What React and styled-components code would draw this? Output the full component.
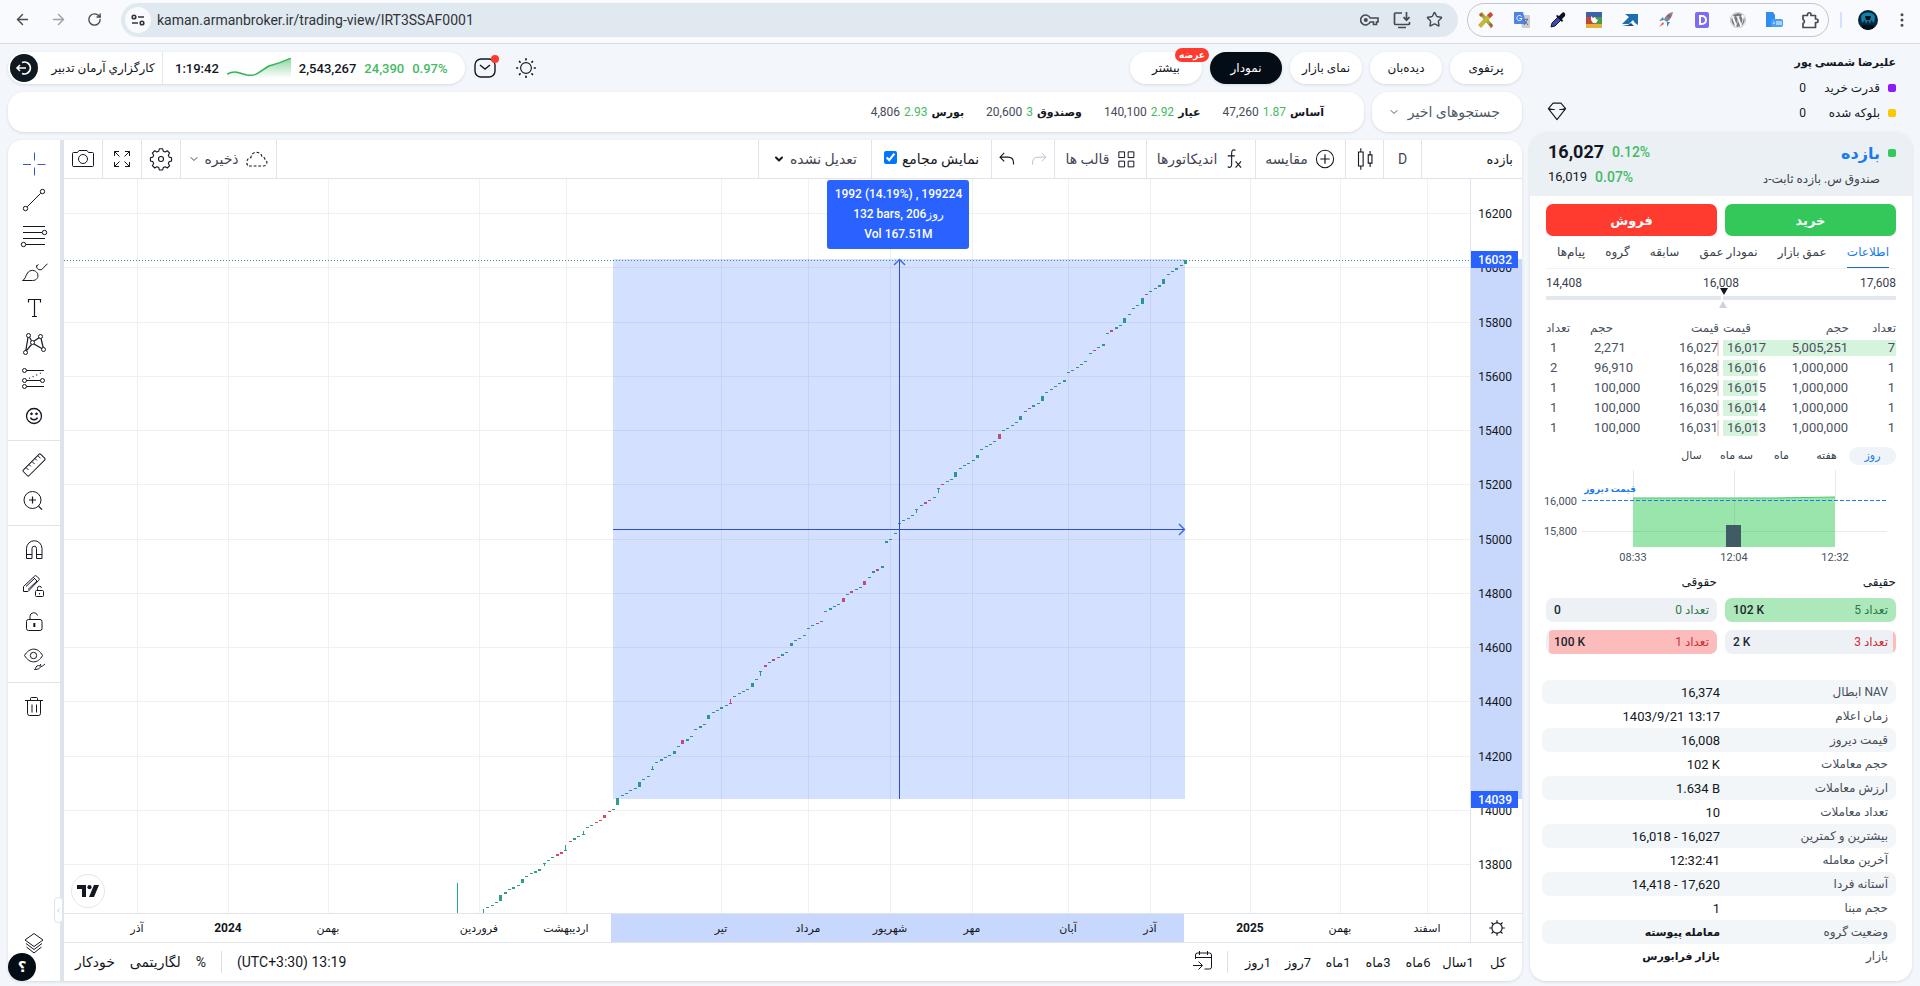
import React, { useState } from "react";
import styled, { createGlobalStyle, css } from "styled-components";
import {
  ArrowLeft,
  ArrowRight,
  ChevronDown,
  ChevronLeft,
  EllipsisVertical,
  RotateCw,
  Star,
} from "lucide-react";
import { FaWordpress } from "react-icons/fa";

const GlobalStyle = createGlobalStyle`
  * {
    box-sizing: border-box;
  }

  body {
    margin: 0;
    background-color: #f3f7fb;
    color: #131722;
    font-family: Roboto, "DejaVu Sans", sans-serif;
    font-size: 12px;
  }

  button {
    background: none;
    border: none;
    padding: 0;
    color: inherit;
    font: inherit;
    cursor: pointer;
  }

  h1, h2, p, dl, dd, dt {
    margin: 0;
    font: inherit;
  }
`;

const Page = styled.div`
  display: flex;
  flex-direction: column;
  min-height: 100vh;
`;

/* ---------- browser bar ---------- */

const BrowserBar = styled.header`
  display: flex;
  align-items: center;
  gap: 9px;
  height: 44px;
  padding: 3px 8px 7px 4px;
  background-color: #f8fafd;
  border-bottom: 1px solid #d9dde3;
  color: #474b50;
`;

const BrowserBtn = styled.button`
  display: flex;
  align-items: center;
  justify-content: center;
  width: ${({ $w }) => $w || 36}px;
  height: 32px;
  opacity: ${({ disabled }) => (disabled ? 0.5 : 1)};
`;

const NavGroup = styled.div`
  display: flex;
`;

const AddressBar = styled.div`
  display: flex;
  flex: 1;
  align-items: center;
  height: 34px;
  padding: 0 8px 0 4px;
  border-radius: 17px;
  background-color: #e1e9f0;
`;

const SiteInfo = styled.button`
  display: flex;
  align-items: center;
  justify-content: center;
  width: 26px;
  height: 26px;
  border-radius: 50%;
  background-color: #f8fafd;
`;

const Url = styled.input`
  flex: 1;
  min-width: 0;
  margin-left: 4px;
  border: none;
  outline: none;
  background: none;
  color: #30343a;
  font: 14px Roboto, sans-serif;
`;

const Extensions = styled.div`
  display: flex;
  align-items: center;
  height: 34px;
  border: 1px solid #c4c5d3;
  border-radius: 17px;
`;

const BrowserEnd = styled.div`
  display: flex;
  align-items: center;
  gap: 8px;
  padding-left: 2px;
`;

const ThinLine = styled.span`
  width: 2px;
  height: 16px;
  background-color: #d3e3fd;
`;

const Avatar = styled.span`
  display: flex;
  width: 20px;
  height: 20px;
  margin: 0 6px 0 8px;
  border-radius: 50%;
  overflow: hidden;
`;

/* ---------- app frame ---------- */

const Workspace = styled.main`
  display: flex;
  flex: 1;
  gap: 8px;
  padding: 0 8px 5px;
`;

const MainColumn = styled.div`
  display: flex;
  flex: 1;
  flex-direction: column;
  gap: 8px;
  min-width: 0;
  padding-top: 8px;
`;

const TopRow = styled.div`
  display: flex;
  align-items: center;
  height: 32px;
`;

const card = css`
  background-color: #fff;
  box-shadow: 0 1px 3px rgba(30, 50, 80, 0.14);
`;

const StatusPill = styled.div`
  ${card}
  display: flex;
  align-items: center;
  height: 32px;
  padding: 0 17px 0 2px;
  border-radius: 16px;
  white-space: nowrap;
`;

const ExitBtn = styled.button`
  display: flex;
  align-items: center;
  justify-content: center;
  width: 28px;
  height: 28px;
  border-radius: 50%;
  background-color: #101820;
`;

const BrokerName = styled.span`
  display: flex;
  align-items: center;
  justify-content: center;
  width: 125px;
  height: 32px;
  padding-left: 6px;
  border-right: 1px solid #e3e7ec;
  font-size: 12px;
`;

const IndexBox = styled.div`
  display: flex;
  align-items: center;
  gap: 8px;
  padding-left: 12px;
  font-size: 13px;
  font-weight: 500;
`;

const Green = styled.span`
  color: #43bb62;
`;

const IconBtn = styled.button`
  position: relative;
  display: flex;
  align-items: center;
  justify-content: center;
  width: 41px;
  height: 32px;
`;

const RedDot = styled.span`
  position: absolute;
  top: 3px;
  right: 7px;
  width: 8px;
  height: 8px;
  border-radius: 50%;
  background-color: #ff3b30;
`;

const NavTabs = styled.nav`
  display: flex;
  gap: 8px;
  margin-left: auto;
`;

const NavTab = styled.button`
  ${card}
  position: relative;
  width: 72px;
  height: 32px;
  border-radius: 16px;
  font-size: 12px;
  white-space: nowrap;
  ${({ $active }) =>
    $active &&
    css`
      background-color: #040d16;
      color: #fff;
    `}
`;

const NavBadge = styled.span`
  position: absolute;
  top: -4px;
  right: -7px;
  padding: 0 4px;
  border-radius: 7px;
  background-color: #ff3b30;
  color: #fff;
  font-size: 9px;
  font-weight: 700;
  line-height: 14px;
`;

const SearchRow = styled.div`
  display: flex;
  gap: 8px;
`;

const Watchlist = styled.div`
  ${card}
  display: flex;
  flex: 1;
  align-items: center;
  gap: 22px;
  height: 40px;
  padding: 0 40px;
  border-radius: 16px;
  color: #454c57;
  direction: rtl;
  white-space: nowrap;
`;

const WatchItem = styled.a`
  display: flex;
  gap: 4px;
  align-items: center;
  color: inherit;
  text-decoration: none;

  b {
    color: #131722;
    font-size: 11px;
  }
`;

const RecentSearch = styled.button`
  ${card}
  display: flex;
  align-items: center;
  justify-content: space-between;
  width: 150px;
  height: 40px;
  padding: 0 22px 0 16px;
  border-radius: 16px;
  color: #515a68;
  direction: rtl;
  font-size: 14px;
  white-space: nowrap;
`;

/* ---------- chart ---------- */

const ChartCard = styled.section`
  ${card}
  display: flex;
  flex: 1;
  border-radius: 14px;
`;

const ToolRail = styled.div`
  position: relative;
  display: flex;
  flex-direction: column;
  align-items: center;
  width: 56px;
  padding: 6px 0 20px;
  border-right: 4px solid #dfe3ec;

  hr {
    align-self: stretch;
    height: 1px;
    margin: 6px 0;
    border: none;
    background-color: #e0e3eb;
  }
`;

const RailBtn = styled.button`
  display: flex;
  align-items: center;
  justify-content: center;
  width: 52px;
  height: 36px;
  margin-top: ${({ $last }) => ($last ? "auto" : 0)};
`;

const HelpBtn = styled.button`
  position: absolute;
  bottom: 0;
  left: 0;
  width: 28px;
  height: 28px;
  border-radius: 50%;
  background-color: #040d16;
  color: #fff;
  font-size: 15px;
  font-weight: 700;
`;

const CollapseBtn = styled.button`
  position: absolute;
  right: -3px;
  bottom: 58px;
  display: flex;
  align-items: center;
  justify-content: center;
  width: 9px;
  height: 26px;
  border: 1px solid #dfe3ec;
  border-radius: 4px;
  background-color: #fff;
  color: #9aa0ab;
`;

const ChartArea = styled.div`
  display: flex;
  flex: 1;
  flex-direction: column;
  min-width: 0;
`;

const Toolbar = styled.div`
  display: flex;
  height: 39px;
  border-bottom: 1px solid #e0e3eb;
  direction: rtl;
  white-space: nowrap;
`;

const Tool = styled.div`
  display: flex;
  align-items: center;
  justify-content: center;
  gap: 6px;
  width: ${({ $w }) => $w}px;
  border-left: 1px solid #e0e3eb;
  color: #434651;
  font-size: 14px;

  button {
    display: flex;
    align-items: center;
    gap: ${({ $gap }) => $gap || 6}px;
  }
`;

const ToolEnd = styled.div`
  display: flex;
  flex-direction: row-reverse;
  margin-right: auto;

  ${Tool} {
    border-left: none;
    border-right: 1px solid #e0e3eb;
  }
`;

const SymbolTool = styled(Tool)`
  justify-content: flex-start;
  padding-right: 9px;
  color: #131722;
  font-size: 13px;
`;

const CheckLabel = styled.label`
  display: flex;
  align-items: center;
  gap: 5px;
  color: #131722;

  input {
    width: 13px;
    height: 13px;
    margin: 0 0 4px;
    accent-color: #0075ff;
  }
`;

const AdjustSelect = styled.select`
  border: none;
  background: none;
  color: #434651;
  font: 14px Roboto, "DejaVu Sans", sans-serif;
  appearance: none;
`;

const AdjustBox = styled.label`
  display: flex;
  align-items: center;
  gap: 4px;
`;

const ChartGrid = styled.div`
  display: grid;
  flex: 1;
  grid-template-columns: 1fr 52px;
  grid-template-rows: 1fr 29px;
`;

const Pane = styled.div`
  position: relative;
  min-width: 0;

  > svg {
    position: absolute;
    width: 100%;
    height: 100%;
  }
`;

const PriceAxis = styled(Pane)`
  border-left: 1px solid #e0e3eb;
`;

const TimeAxis = styled(Pane)`
  border-top: 1px solid #e0e3eb;
`;

const AxisCorner = styled.button`
  display: flex;
  align-items: center;
  justify-content: center;
  border-top: 1px solid #e0e3eb;
  border-left: 1px solid #e0e3eb;
`;

const AxisText = styled.text`
  fill: #131722;
  font-family: Roboto, "DejaVu Sans", sans-serif;
  font-size: ${({ $size }) => $size || 12}px;
  font-weight: ${({ $weight }) => $weight || 400};
`;

const MeasureTip = styled.div`
  position: absolute;
  top: 1px;
  left: 54.3%;
  width: 142px;
  padding: 4px 0 5px;
  border-radius: 3px;
  background-color: #2962ff;
  color: #fff;
  font-size: 12px;
  font-weight: 500;
  line-height: 20px;
  text-align: center;
`;

const TvBadge = styled.a`
  position: absolute;
  bottom: 5px;
  left: 7px;
  display: flex;
  align-items: center;
  justify-content: center;
  width: 34px;
  height: 34px;
  border: 1px solid #e6e6e6;
  border-radius: 50%;
  background-color: #fff;
`;

const BottomBar = styled.div`
  display: flex;
  align-items: center;
  height: 39px;
  padding: 0 4px 0 11px;
  border-top: 1px solid #e0e3eb;
  font-size: 14px;
  white-space: nowrap;
`;

const BottomGroup = styled.div`
  display: flex;
  align-items: center;
  gap: ${({ $gap }) => $gap}px;
  margin-left: ${({ $end }) => ($end ? "auto" : 0)};
`;

const RangeBtn = styled.button`
  width: 40px;
  font-size: 13px;
  text-align: center;
`;

const BarLine = styled.span`
  width: 1px;
  height: 22px;
  background-color: #dcdfe5;
`;

/* ---------- sidebar ---------- */

const Side = styled.aside`
  display: flex;
  flex-direction: column;
  width: 382px;
`;

const Account = styled.div`
  display: flex;
  align-items: flex-end;
  justify-content: space-between;
  height: 88px;
  padding: 6px 16px 7px;
  direction: rtl;
`;

const AccountRow = styled.p`
  display: flex;
  align-items: center;
  gap: 8px;
  height: 25px;

  span {
    width: 66px;
  }
`;

const Square = styled.i`
  width: 8px;
  height: 8px;
  border-radius: 2px;
  background-color: ${({ $color }) => $color};
`;

const UserName = styled.h2`
  height: 25px;
  font-size: 11px;
  font-weight: 700;
  line-height: 25px;
`;

const SideCard = styled.section`
  ${card}
  display: flex;
  flex: 1;
  flex-direction: column;
  border-radius: 16px;
  overflow: hidden;
`;

const SymbolHead = styled.header`
  display: flex;
  justify-content: space-between;
  height: 64px;
  padding: 7px 16px 0 18px;
  background-color: #ebf0f5;
`;

const PriceLine = styled.p`
  display: flex;
  align-items: center;
  gap: 8px;
  height: 25px;
  font-size: ${({ $big }) => ($big ? 18 : 13)}px;
  font-weight: ${({ $big }) => ($big ? 700 : 400)};

  ${Green} {
    font-size: 14px;
    font-weight: 500;
  }
`;

const SymbolName = styled.h1`
  display: flex;
  align-items: center;
  gap: 8px;
  height: 28px;
  color: #187bf0;
  direction: rtl;
  font-size: 16px;
  font-weight: 700;
`;

const SymbolSub = styled.p`
  padding-right: 16px;
  color: #3b424d;
  direction: rtl;
  font-size: 12px;
  line-height: 24px;
`;

const SideBody = styled.div`
  display: flex;
  flex-direction: column;
  padding: 8px 16px 0;
`;

const OrderBtns = styled.div`
  display: grid;
  grid-template-columns: 1fr 1fr;
  gap: 8px;
`;

const OrderBtn = styled.button`
  height: 32px;
  border-radius: 7px;
  background-color: ${({ $sell }) => ($sell ? "#ff3b30" : "#34c759")};
  color: #fff;
  font-size: 13px;
  font-weight: 700;
`;

const InfoTabs = styled.div`
  display: flex;
  justify-content: space-between;
  height: 33px;
  padding: 0 7px 0 11px;
  border-bottom: 1px solid #f0f2f5;
  direction: rtl;
`;

const InfoTab = styled.button`
  border-bottom: 1px solid transparent;
  color: #3b424d;
  font-size: 12px;
  white-space: nowrap;
  ${({ $active }) =>
    $active &&
    css`
      border-color: #1a6fb8;
      color: #187bf0;
    `}
`;

const RangeBox = styled.div`
  display: flex;
  flex-direction: column;
  padding-top: 5px;
  color: #3b424d;

  svg {
    width: 100%;
    margin-top: -7px;
  }
`;

const RangeLabels = styled.div`
  display: flex;
  justify-content: space-between;
  line-height: 18px;
`;

const DepthBox = styled.div`
  display: flex;
  gap: 4px;
  margin-top: 2px;
`;

const DepthTable = styled.table`
  flex: 1;
  table-layout: fixed;
  border-collapse: separate;
  border-spacing: 0 4px;
  color: #4a5260;
  font-size: 13px;

  th {
    height: 16px;
    padding: 0;
    font-size: 12px;
    font-weight: 400;
    line-height: 16px;
  }

  td {
    height: 16px;
    padding: 0 1px 0 4px;
    line-height: 16px;
  }
`;

const Cell = styled.td`
  text-align: ${({ $align }) => $align};
`;

const HeadCell = styled.th`
  width: ${({ $w }) => $w}px;
  text-align: ${({ $align }) => $align};
`;

const Periods = styled.div`
  display: flex;
  direction: rtl;
  margin-top: 7px;
`;

const Period = styled.button`
  width: ${({ $active }) => ($active ? 47 : 45)}px;
  height: 18px;
  border-radius: 9px;
  background-color: ${({ $active }) => ($active ? "#eff4f9" : "transparent")};
  color: ${({ $active }) => ($active ? "#187bf0" : "#3b424d")};
  font-size: 11px;
  line-height: 18px;
  white-space: nowrap;
`;

const MiniChart = styled.svg`
  width: 100%;
  height: 100px;
  margin-top: 5px;
  overflow: visible;
  font-family: Roboto, "DejaVu Sans", sans-serif;
  font-size: 11px;
`;

const Holders = styled.div`
  display: grid;
  grid-template-columns: 1fr 1fr;
  column-gap: 8px;
  row-gap: 8px;
  margin-top: 4px;
  direction: rtl;
`;

const HolderTitle = styled.h2`
  font-size: 12px;
  line-height: 16px;
`;

const HolderBar = styled.div`
  display: flex;
  align-items: center;
  justify-content: space-between;
  height: 24px;
  padding: 0 8px;
  border-radius: 7px;
  color: ${({ $sell }) => ($sell ? "#d12f35" : "#2c7a45")};
  font-size: 12px;

  b {
    color: #20262e;
    font-weight: 500;
    direction: ltr;
  }
`;

const InfoList = styled.dl`
  margin: 26px 0 0 -4px;
`;

const InfoRow = styled.div`
  display: grid;
  grid-template-columns: 178px 1fr;
  align-items: center;
  height: 24px;
  padding-right: 8px;
  border-radius: 7px;

  &:nth-child(odd) {
    background-color: #f2f6f9;
  }

  dt {
    order: 2;
    color: #474d57;
    direction: rtl;
    font-size: 12px;
  }

  dd {
    font-size: ${({ $persian }) => ($persian ? 11 : 13)}px;
    font-weight: ${({ $persian }) => ($persian ? 700 : 400)};
    text-align: right;
  }
`;

/* ---------- data ---------- */

const navTabs = ["بیشتر", "نمودار", "نمای بازار", "دیده‌بان", "پرتفوی"];

const watchlist = [
  ["آساس", "1.87", "47,260"],
  ["عیار", "2.92", "140,100"],
  ["وصندوق", "3", "20,600"],
  ["بورس", "2.93", "4,806"],
];

const infoTabs = ["اطلاعات", "عمق بازار", "نمودار عمق", "سابقه", "گروه", "پیام‌ها"];
const periods = ["روز", "هفته", "ماه", "سه ماه", "سال"];
const ranges = ["1روز", "7روز", "1ماه", "3ماه", "6ماه", "1سال", "کل"];

const buyOrders = [
  ["16,017", "5,005,251", "7", 100],
  ["16,016", "1,000,000", "1", 20],
  ["16,015", "1,000,000", "1", 20],
  ["16,014", "1,000,000", "1", 20],
  ["16,013", "1,000,000", "1", 20],
];

const sellOrders = [
  ["1", "2,271", "16,027"],
  ["2", "96,910", "16,028"],
  ["1", "100,000", "16,029"],
  ["1", "100,000", "16,030"],
  ["1", "100,000", "16,031"],
];

const holders = [
  { label: "تعداد 5", value: "102 K", share: 100 },
  { label: "تعداد 0", value: "0", share: 0 },
  { label: "تعداد 3", value: "2 K", share: 2, sell: true },
  { label: "تعداد 1", value: "100 K", share: 98, sell: true },
];

const info = [
  ["NAV ابطال", "16,374"],
  ["زمان اعلام", "1403/9/21 13:17"],
  ["قیمت دیروز", "16,008"],
  ["حجم معاملات", "102 K"],
  ["ارزش معاملات", "1.634 B"],
  ["تعداد معاملات", "10"],
  ["بیشترین و کمترین", "16,018 - 16,027"],
  ["آخرین معامله", "12:32:41"],
  ["آستانه فردا", "14,418 - 17,620"],
  ["حجم مبنا", "1"],
  ["وضعیت گروه", "معامله پیوسته", true],
  ["بازار", "بازار فرابورس", true],
];

const PANE_W = 1406;
const PANE_H = 734;

const months = [
  [73, "آذر"],
  [164, "2024"],
  [264, "بهمن"],
  [415, "فروردین"],
  [502, "اردیبهشت"],
  [657, "تیر"],
  [744, "مرداد"],
  [826, "شهریور"],
  [908, "مهر"],
  [1004, "آبان"],
  [1086, "آذر"],
  [1186, "2025"],
  [1276, "بهمن"],
  [1363, "اسفند"],
];

const prices = Array.from({ length: 13 }, (_, i) => ({
  value: 16200 - i * 200,
  y: 34 + i * 54.27,
}));

const marks = [
  [80, "16032"],
  [620, "14039"],
];

// one entry per bar: top[+height][r = down][t / l = wick under / over the tick]
const bars = `730+5l 728 726 723 716+6 713+2 710 708+2 706 700+4 697 694 692+2 690+2 684+3t 681 678 675+2r 673+2r
666+6l 662r 659+2 657 652+4l 648 646 643r 641r 636+3r 632r 630 619+7 616 614 611 609 603+5 600 597 587+4l
583 580+2 578 576 572+3 567 561+4r 560+2 557 550 547+2 545 536+4 533 531 528+2 526 520+5rl 517 514 512 510
504+4 500 492+5t 486+2r 483 480+2r 478r 475+2 473 464+3 461 459 456 449 446 444r 442 432 429+2 427 425 419+4r
415 412+2r 410 408 402+4r 398 392+2 390+2r 387+2 362+2 360 354 344 341 339 336 330+4t 326 323+2r 321r 318
309+5t 305r 302 300 293+5 289 286 284 281 276+3 270 267 265 262 255+5r 251 249 246 243 237+4 232 229r 226+2
224 217+5 213 210 207 204 201+2 193 191 188 185 182 174 171r 168 165+2 154 151+2r 148+2 146 139+5 135 129 126
119+6 115r 112 109 106+2 100+5 95 92 89+2 86 81+4`
  .split(/\s+/)
  .map((item, i) => {
    const [, top, height, flags] = item.match(/^(\d+)(?:\+(\d+))?(\w*)$/);
    return {
      x: Math.round(419 + i * 4.334),
      top: Number(top),
      height: Number(height || 1),
      down: flags.includes("r"),
      wick: flags.includes("t") ? "t" : flags.includes("l") ? "l" : "",
    };
  });

const percent = (value, total) => `${(value / total) * 100}%`;

/* ---------- drawings ---------- */

const Line = ({ size = 28, children, color = "#131722", ...rest }) => (
  <svg
    width={size}
    height={size}
    viewBox="0 0 28 28"
    fill="none"
    stroke={color}
    strokeWidth="1"
    aria-hidden="true"
    {...rest}
  >
    {children}
  </svg>
);

const railIcons = {
  نشانگر: (
    <Line color="#3a55d9">
      <path d="M14.5 2.5v8M14.5 17.500v8M3 14.5h8M17.500 14.5h8" />
    </Line>
  ),
  "خط روند": (
    <Line>
      <circle cx="5.5" cy="22.5" r="2.2" />
      <circle cx="22.5" cy="5.5" r="2.2" />
      <path d="M7.3 20.7 20.7 7.3" />
    </Line>
  ),
  فیبوناچی: (
    <Line>
      <path d="M3 4.5h22M3 10.5h19M3 16.5h22M6 22.5h19" />
      <circle cx="24.5" cy="10.5" r="2.2" />
      <circle cx="3.5" cy="22.5" r="2.2" />
    </Line>
  ),
  قلم: (
    <Line>
      <path d="M2.5 22.5c3-1 2.5-4 5-7.500a5.800 5.800 0 0 1 10 .5c1.500 4-1 7-5 7z" />
      <path d="M17.500 7c-1.500 1-1 4.500 2.500 4.800 3 .2 3.500-3.300 7.500-5.800M16.500 9c0-1 .5-2 2-2.500" />
    </Line>
  ),
  متن: (
    <Line>
      <path d="M8.5 8.5v-3h12v3M14.5 5.5v17M12 22.5h5" strokeWidth="1.2" />
    </Line>
  ),
  الگو: (
    <Line>
      <circle cx="8.5" cy="5.5" r="2" />
      <circle cx="20.5" cy="6.5" r="2" />
      <circle cx="12.5" cy="12.5" r="2" />
      <circle cx="5.5" cy="22.5" r="2" />
      <circle cx="23.5" cy="19.5" r="2" />
      <path
        d="m8 7.5-2.2 13M9.5 7.3l2 3.5M11.5 14.5l-5 6.2M14.2 11l4.800-3.300M14 14l7.800 4.500M21 8.5l2.200 9"
        strokeWidth="1.2"
      />
    </Line>
  ),
  پیش‌بینی: (
    <Line>
      <circle cx="4.5" cy="4.5" r="2" />
      <circle cx="4.5" cy="14.5" r="2" />
      <circle cx="4.5" cy="20.5" r="2" />
      <circle cx="22.5" cy="14.5" r="2" />
      <path d="M6.5 4.5H24M6.5 14.5h14M6.5 20.5H24" />
      <path d="M9 12.5 23 6" strokeDasharray="1 3" strokeWidth="1.2" />
    </Line>
  ),
  شکلک: (
    <Line>
      <circle cx="14" cy="14" r="7.5" strokeWidth="1.3" />
      <path d="M10.5 15.5c1 3 6 3 7 0" strokeWidth="1.3" />
      <circle cx="11.5" cy="11.8" r=".9" fill="#131722" />
      <circle cx="16.5" cy="11.8" r=".9" fill="#131722" />
    </Line>
  ),
  اندازه: (
    <Line>
      <rect x="1.8" y="10" width="24.5" height="8" rx="1" transform="rotate(-45 14 14)" />
      <path d="m6 16.5 2.5 2.5M9 13.5l1.800 1.800M12 10.5l2.500 2.500M15 7.5l1.800 1.800M18 4.800l2.500 2.500" />
    </Line>
  ),
  بزرگنمایی: (
    <Line>
      <circle cx="12.5" cy="13" r="8.5" />
      <path d="M12.5 9.5v7M9 13h7M18.5 19.2l3.500 3.500" strokeWidth="1.2" />
    </Line>
  ),
  آهنربا: (
    <Line>
      <path d="M6.5 22.5v-10a7.500 7.500 0 0 1 15.5 0v10h-5.500v-10a2 2 0 0 0-4.500 0v10zM6.5 18.5H12M16.5 18.5H22" />
    </Line>
  ),
  "قفل قلم": (
    <Line>
      <path d="M3.5 14.5 14.5 4.2a1.500 1.500 0 0 1 2.200 0l2 2a1.500 1.500 0 0 1 0 2.200L8 19.5H3.5zM6 14.5l9-8.500M8 17.5l9-8.500M13.5 5.5l4 4" />
      <rect x="15.5" y="18.5" width="8" height="6" rx="1" />
      <path d="M17.5 18.5v-2a2 2 0 0 1 4-.5M19.5 21v1.5" />
    </Line>
  ),
  قفل: (
    <Line>
      <rect x="6.5" y="11.5" width="15.5" height="11" rx="2" />
      <path d="M10 11.5v-3c0-4.500 6.500-5 7.500-1" />
      <path d="M14.3 15v4" strokeWidth="2" />
    </Line>
  ),
  نمایش: (
    <Line>
      <path d="M4.5 11.5c5-8.500 13.500-8.500 18 0-4.500 8.500-13 8.500-18 0z" />
      <circle cx="13.5" cy="11.5" r="3.2" />
      <path d="M14.5 25.5c1.500-.5 1-4 4-4 3.500.5 2 4-4 4zM20 22l.8-2M21 22.5c2-.2 2.500-1.500 4-2.500" />
    </Line>
  ),
  حذف: (
    <Line>
      <path d="M5 7.5h18M10.5 7.5v-2a1 1 0 0 1 1-1h5a1 1 0 0 1 1 1v2M7.5 7.5v13a2 2 0 0 0 2 2h9a2 2 0 0 0 2-2v-13M12 11.5v8M16.5 11.5v8" />
    </Line>
  ),
};

const LayersIcon = () => (
  <Line>
    <path d="m14 4.5 9 6.5-9 6.5L5 11z" />
    <path d="m6 14.5 8 6 8-6M6.5 18l7.500 6 7.500-6" />
  </Line>
);

const CameraIcon = () => (
  <Line>
    <path d="M4.5 7.500h4l1.500-2h8l1.500 2h4a1 1 0 0 1 1 1v12a1 1 0 0 1-1 1h-19a1 1 0 0 1-1-1v-12a1 1 0 0 1 1-1z" />
    <circle cx="14" cy="14" r="4.500" />
  </Line>
);

const FullscreenIcon = () => (
  <Line>
    <path d="M6.5 11V6.5H11M6.5 6.5l5 5M17 6.5h4.500V11M21.5 6.5l-5 5M6.5 17v4.500H11M6.5 21.5l5-5M17 21.5h4.500V17M21.5 21.5l-5-5" />
  </Line>
);

const GearIcon = () => (
  <Line size={26}>
    <path
      d="M12.2 4.5h3.600l.6 2.600 2.100.9 2.300-1.400 2.500 2.500-1.400 2.300.9 2.100 2.600.6v3.600l-2.600.6-.9 2.100 1.400 2.300-2.500 2.500-2.300-1.400-2.100.9-.6 2.600h-3.600l-.6-2.600-2.100-.9-2.300 1.400-2.500-2.500 1.400-2.300-.9-2.100-2.600-.6v-3.600l2.600-.6.9-2.100L4.700 9.100l2.500-2.500L9.500 8l2.100-.9z"
      transform="translate(0 -1.500)"
      strokeWidth="1.200"
      strokeLinejoin="round"
    />
    <circle cx="14" cy="14" r="2.700" strokeWidth="1.200" />
  </Line>
);

const CloudIcon = () => (
  <Line size={26}>
    <path
      d="M6.5 21.5h16a4 4 0 0 0 1-7.500c-.5-2-2-2.500-3-2.500-1-6-11-7-12 1-5 0-6 8-2 9z"
      strokeDasharray="3 2"
      strokeWidth="1.2"
    />
  </Line>
);

const AxisSunIcon = () => (
  <Line size={22}>
    <circle cx="14" cy="14" r="6.5" strokeWidth="1.5" />
    <path
      d="M14 4v3.500M14 20.5V24M4 14h3.500M20.5 14H24M7 7l2.400 2.400M18.6 18.6 21 21M21 7l-2.400 2.400M9.400 18.6 7 21"
      strokeWidth="1.5"
    />
  </Line>
);

const ThemeIcon = () => (
  <Line size={26}>
    <circle cx="14" cy="14" r="5.8" strokeWidth="1.2" />
    <path
      d="M14 4v1M14 23v1M4 14h1M23 14h1M7 7l.6.6M20.400 20.400l.6.6M21 7l-.6.6M7.600 20.400l-.6.6"
      strokeWidth="1.800"
      strokeLinecap="round"
    />
  </Line>
);

const MailIcon = () => (
  <Line>
    <rect x="4" y="5" width="20" height="18" rx="6" strokeWidth="1.4" />
    <path d="m9 11 5 4 5-4" strokeWidth="1.4" />
  </Line>
);

const Sparkline = () => (
  <svg width="64" height="20" viewBox="0 0 64 20" aria-hidden="true">
    <defs>
      <linearGradient id="spark" x1="0" y1="0" x2="0" y2="1">
        <stop offset="0" stopColor="#43bb62" stopOpacity=".6" />
        <stop offset="1" stopColor="#43bb62" stopOpacity="0" />
      </linearGradient>
    </defs>
    <path d="M0 16c8-4 12-1 20 1 10 2 14-5 22-9 8-2 14-4 22-8v20H0z" fill="url(#spark)" />
    <path
      d="M0 16c8-4 12-1 20 1 10 2 14-5 22-9 8-2 14-4 22-8"
      fill="none"
      stroke="#35b257"
      strokeWidth="1.5"
    />
  </svg>
);

const KeyIcon = () => (
  <svg width="20" height="14" viewBox="0 0 20 14" fill="none" stroke="#474b50" strokeWidth="1.6">
    <path d="M10.2 5H18v4h-1.500v2.500h-3V9h-3.300a5 5 0 1 1 0-4z" />
    <circle cx="5.800" cy="7" r="1.200" fill="#474b50" />
  </svg>
);

const InstallIcon = () => (
  <svg width="18" height="18" viewBox="0 0 18 18" fill="none" stroke="#474b50" strokeWidth="1.700">
    <path d="M9 2H2.500a1 1 0 0 0-1 1v9.500a1 1 0 0 0 1 1h13a1 1 0 0 0 1-1V11M5 16.500h8M13.500 1v8M10.500 6.200l3 3 3-3" />
  </svg>
);

const extensionIcons = [
  <svg key="x" width="18" height="18" viewBox="0 0 18 18">
    <path d="M2 3 5 1l11 13-2 3z" fill="#8bb53c" />
    <path d="M13 1l3 3L4 17l-3-3z" fill="#c9b53d" />
    <path d="M10 4l4-3 2 3-3 3zM2 4l2-2 2 2-2 2zM12 13l2-1 2 3-2 2z" fill="#d0453c" />
  </svg>,
  <svg key="g" width="18" height="18" viewBox="0 0 18 18">
    <path d="M7 4h9a1 1 0 0 1 1 1v11a1 1 0 0 1-1 1H9z" fill="#c9ccd1" />
    <path d="M1 1h9l3 12H2a1 1 0 0 1-1-1z" fill="#4d84ec" />
    <path d="M8.5 5.5A2.600 2.600 0 1 0 9 7.5H6.5" fill="none" stroke="#fff" />
    <path d="m10 9 5-1-4 6M11 9l4 5" fill="none" stroke="#66707e" />
  </svg>,
  <svg key="p" width="18" height="18" viewBox="0 0 18 18">
    <path d="m2 16 1-4 6-6 3 3-6 6z" fill="#3f4ba8" stroke="#10152e" />
    <path d="M8 4l2 1 3-3c2-2 4 1 3 3l-3 3 1 2-1 1-6-6z" fill="#0c1028" />
  </svg>,
  <svg key="m" width="16" height="16" viewBox="0 0 16 16">
    <path d="M0 0h16v5H0z" fill="#3a62ae" />
    <path d="M0 5h8v11H0z" fill="#c64535" />
    <path d="M8 5h8v11H8z" fill="#4e9a4a" />
    <path d="M0 12h16v4H0z" fill="#e3b23a" />
    <path d="m5 4 2 2 2-1 1 2 2 1-2 3H7L5 8z" fill="#fff" />
  </svg>,
  <svg key="a" width="18" height="18" viewBox="0 0 18 18">
    <path d="M4 3h13v11l-3-2-2-3-4 4H1l7-7z" fill="#1b6fae" />
    <path d="M1 15l6-1 3-2 3 3z" fill="#174f86" />
  </svg>,
  <svg key="r" width="18" height="18" viewBox="0 0 18 18">
    <path d="M16 1c-5 1-8 4-9 8l3 2c3-2 5-5 6-10z" fill="#7b8a9b" />
    <path d="m7 9-5 1 4-4zM10 11v5l3-5z" fill="#3f86c9" />
    <path d="m6 11-4 5 5-3z" fill="#e85b3a" />
    <circle cx="12" cy="5" r="1.500" fill="#d84040" />
  </svg>,
  <svg key="d" width="16" height="16" viewBox="0 0 16 16">
    <rect x="1" width="14" height="16" rx="2" fill="#7c6cf2" />
    <path d="M6 4h2a4 4 0 0 1 0 8H6z" fill="none" stroke="#fff" strokeWidth="2" />
  </svg>,
  <FaWordpress key="w" size={16} color="#777b80" />,
  <svg key="b" width="18" height="18" viewBox="0 0 18 18">
    <path d="M1 1h7l2 3v12H1z" fill="#2f8cf0" />
    <rect x="6" y="8" width="12" height="8" rx="2" fill="#4b9ff5" />
    <path d="M8 12h2M12 10v4M14 10v4M16 10v4" stroke="#fff" />
  </svg>,
  <svg key="z" width="18" height="18" viewBox="0 0 18 18" fill="none" stroke="#474b50" strokeWidth="1.700">
    <path d="M2 4.500h4.500V3.500a1.500 1.500 0 0 1 3.500 0v1h4.500V8h.8a1.500 1.500 0 0 1 0 3.500h-.8v5H2v-4.200a2 2 0 0 0 0-3.800z" strokeLinejoin="round" />
  </svg>,
];

const CandleChart = () => (
  <svg viewBox={`0 0 ${PANE_W} ${PANE_H}`} preserveAspectRatio="none" shapeRendering="crispEdges">
    <g stroke="#eef0f2">
      {prices.map(({ value, y }) => (
        <path key={value} d={`M0 ${Math.round(y) + 0.5}H${PANE_W}`} />
      ))}
      {months.map(([x]) => (
        <path key={x} d={`M${x + 0.5} 0V${PANE_H}`} />
      ))}
    </g>
    <path d="M393.5 704v30" stroke="#26a69a" />
    {bars.map(({ x, top, height, down, wick }) => (
      <g key={x} fill={down ? "#e0485a" : "#2f9e88"}>
        <rect x={wick ? x : x - 1} y={top} width={wick ? 1 : 3} height={height} />
        {wick && (
          <rect x={x - 1} y={wick === "t" ? top : top + height - 1} width="3" height="1" />
        )}
      </g>
    ))}
    <rect x="549" y="80" width="572" height="540" fill="#2962ff" fillOpacity=".2" />
    <path d="M0 81.5H1406" stroke="#3b8f88" strokeDasharray="1 2" />
    <path d="M549 350.5h571M835.5 81v539" stroke="#2a4fd0" />
    <path
      d="m830 86 5.500-5.500L841 86M1115 345l5.500 5.500-5.500 5.500"
      fill="none"
      stroke="#4a6be0"
      strokeWidth="1.5"
      shapeRendering="auto"
    />
  </svg>
);

const PriceLabels = () => (
  <svg>
    <rect y={percent(80, PANE_H)} width="52" height={percent(540, PANE_H)} fill="#c8d7fc" />
    {prices.map(({ value, y }) => (
      <AxisText key={value} x="41" y={percent(y, PANE_H)} dy="5" textAnchor="end">
        {value}
      </AxisText>
    ))}
    {marks.map(([y, value]) => (
      <svg key={value} y={percent(y, PANE_H)} overflow="visible">
        <rect y="-8" width="47" height="17" fill="#2962ff" />
        <AxisText x="41" y="5" textAnchor="end" $weight={500} style={{ fill: "#fff" }}>
          {value}
        </AxisText>
      </svg>
    ))}
  </svg>
);

const TimeLabels = () => (
  <svg>
    <rect x={percent(547, PANE_W)} width={percent(573, PANE_W)} height="28" fill="#c8d7fc" />
    {months.map(([x, name]) => {
      const isYear = /\d/.test(name);
      return (
        <AxisText
          key={x}
          x={percent(x, PANE_W)}
          y="18"
          textAnchor="middle"
          $size={isYear ? 12 : 11}
          $weight={isYear ? 700 : 400}
        >
          {name}
        </AxisText>
      );
    })}
  </svg>
);

const IntradayChart = () => (
  <MiniChart viewBox="0 0 350 100" preserveAspectRatio="none">
    <g stroke="#e6e9ee">
      <path d="M36 61.5h305M87.5 0v30M188.5 0v30M289.5 0v30" />
    </g>
    <path d="M87 28h140l62-1v50H87z" fill="#9ae5ab" />
    <path d="M87 28h140l62-1" fill="none" stroke="#4fc46c" />
    <path d="M188.5 28v49M87 61.5h202" stroke="#8ed79f" />
    <rect x="180" y="55" width="15" height="22" fill="#405b63" />
    <path d="M36 30.5h304" stroke="#187bf0" strokeDasharray="4 2" />
    <g fill="#4a5260">
      <text x="31" y="35" textAnchor="end">16,000</text>
      <text x="31" y="65" textAnchor="end">15,800</text>
      <text x="87" y="91" textAnchor="middle">08:33</text>
      <text x="188" y="91" textAnchor="middle">12:04</text>
      <text x="289" y="91" textAnchor="middle">12:32</text>
    </g>
    <text x="64" y="22" textAnchor="middle" fill="#187bf0" fontSize="9" fontWeight="700">
      قیمت دیروز
    </text>
  </MiniChart>
);

/* ---------- sections ---------- */

const Browser = () => (
  <BrowserBar>
    <NavGroup>
      <BrowserBtn aria-label="Back">
        <ArrowLeft size={17} />
      </BrowserBtn>
      <BrowserBtn aria-label="Forward" disabled>
        <ArrowRight size={17} />
      </BrowserBtn>
      <BrowserBtn aria-label="Reload">
        <RotateCw size={15} strokeWidth={2.2} />
      </BrowserBtn>
    </NavGroup>
    <AddressBar>
      <SiteInfo aria-label="Site information">
        <svg width="14" height="14" viewBox="0 0 14 14" fill="none" stroke="#30343a" strokeWidth="1.6">
          <circle cx="3" cy="4" r="1.8" />
          <circle cx="11" cy="10" r="1.8" />
          <path d="M7 4h6M1 10h6" />
        </svg>
      </SiteInfo>
      <Url
        aria-label="Address"
        defaultValue="kaman.armanbroker.ir/trading-view/IRT3SSAF0001"
      />
      <BrowserBtn aria-label="Passwords" $w={32}>
        <KeyIcon />
      </BrowserBtn>
      <BrowserBtn aria-label="Install" $w={32}>
        <InstallIcon />
      </BrowserBtn>
      <BrowserBtn aria-label="Bookmark" $w={32}>
        <Star size={17} />
      </BrowserBtn>
    </AddressBar>
    <Extensions>
      {extensionIcons.map((icon, i) => (
        <BrowserBtn key={i} aria-label={`Extension ${i + 1}`}>
          {icon}
        </BrowserBtn>
      ))}
    </Extensions>
    <BrowserEnd>
      <ThinLine />
      <Avatar>
        <svg width="20" height="20" viewBox="0 0 20 20">
          <path d="M0 0h20v20H0z" fill="#06263c" />
          <path d="M3 7c1-6 13-6 14 0l-1 6-3-3-1 4-2-4-2 4-1-4-3 3z" fill="#147fa8" />
          <path d="M7 6h6l-1 4H8zM4 15h12v5H4z" fill="#031019" />
        </svg>
      </Avatar>
      <BrowserBtn aria-label="Menu" $w={20}>
        <EllipsisVertical size={18} />
      </BrowserBtn>
    </BrowserEnd>
  </BrowserBar>
);

const TopBar = () => (
  <TopRow>
    <StatusPill>
      <ExitBtn aria-label="خروج">
        <svg width="18" height="18" viewBox="0 0 18 18" fill="none" stroke="#fff" strokeWidth="1.6">
          <path d="M7 3.5a6 6 0 1 1 0 11M2 9h9M5 6 2 9l3 3" />
        </svg>
      </ExitBtn>
      <BrokerName>کارگزاري آرمان تدبیر</BrokerName>
      <IndexBox>
        <span>1:19:42</span>
        <Sparkline />
        <span>2,543,267</span>
        <Green>24,390</Green>
        <Green>0.97%</Green>
      </IndexBox>
    </StatusPill>
    <IconBtn aria-label="پیام‌ها">
      <MailIcon />
      <RedDot />
    </IconBtn>
    <IconBtn aria-label="پوسته">
      <ThemeIcon />
    </IconBtn>
    <NavTabs>
      {navTabs.map((tab) => (
        <NavTab key={tab} $active={tab === "نمودار"}>
          {tab}
          {tab === "بیشتر" && <NavBadge>عرضه</NavBadge>}
        </NavTab>
      ))}
    </NavTabs>
  </TopRow>
);

const ChartToolbar = () => {
  const [showMeetings, setShowMeetings] = useState(true);

  return (
    <Toolbar>
      <SymbolTool $w={101}>
        <button>بازده</button>
      </SymbolTool>
      <Tool $w={38}>
        <button>D</button>
      </Tool>
      <Tool $w={38}>
        <button aria-label="نوع نمودار">
          <Line size={26}>
            <path
              d="M9.5 2.5v4M9.5 21.5v4M7 6.5h5v15H7zM19.5 5.5v4M19.5 18.5v4M17.5 9.5h4v9h-4z"
              strokeWidth="1.2"
            />
          </Line>
        </button>
      </Tool>
      <Tool $w={90}>
        <button>
          <Line size={22}>
            <circle cx="14" cy="14" r="11" strokeWidth="1.3" />
            <path d="M14 8v12M8 14h12" strokeWidth="1.5" />
          </Line>
          مقایسه
        </button>
      </Tool>
      <Tool $w={109}>
        <button>
          <Line size={22}>
            <path
              d="M16 3c-4-1.500-5 0-5 4v14c0 3-2 4.500-5 3M6 10h9M16 17l7 8M23 17l-7 8"
              strokeWidth="1.400"
            />
          </Line>
          اندیکاتورها
        </button>
      </Tool>
      <Tool $w={92}>
        <button>
          <Line size={20}>
            <path
              d="M4 4h8v8H4zM17 4h8v8h-8zM4 17h8v8H4zM17 17h8v8h-8z"
              strokeWidth="1.400"
              strokeLinejoin="round"
            />
          </Line>
          قالب ها
        </button>
      </Tool>
      <Tool $w={63}>
        <button aria-label="Redo">
          <Line size={26} color="#b8bbc4">
            <path d="M7 20v-2c0-4 2-6 6-6h8M17 7.5l4.500 4.500-4.500 4.500" />
          </Line>
        </button>
        <button aria-label="Undo">
          <Line size={26}>
            <path d="M21 20v-2c0-4-2-6-6-6H7M11 7.5 6.5 12l4.500 4.500" strokeWidth="1.2" />
          </Line>
        </button>
      </Tool>
      <Tool $w={120}>
        <CheckLabel>
          نمایش مجامع
          <input
            type="checkbox"
            checked={showMeetings}
            onChange={(event) => setShowMeetings(event.target.checked)}
          />
        </CheckLabel>
      </Tool>
      <Tool $w={113}>
        <AdjustBox>
          <AdjustSelect aria-label="تعدیل">
            <option>تعدیل نشده</option>
          </AdjustSelect>
          <ChevronDown size={12} strokeWidth={4} color="#131722" />
        </AdjustBox>
      </Tool>
      <ToolEnd>
        <Tool $w={39}>
          <button aria-label="عکس">
            <CameraIcon />
          </button>
        </Tool>
        <Tool $w={39}>
          <button aria-label="تمام صفحه">
            <FullscreenIcon />
          </button>
        </Tool>
        <Tool $w={39}>
          <button aria-label="تنظیمات">
            <GearIcon />
          </button>
        </Tool>
        <Tool $w={96} $gap={4}>
          <button>
            <CloudIcon />
            ذخیره
            <ChevronDown size={12} />
          </button>
        </Tool>
      </ToolEnd>
    </Toolbar>
  );
};

const ToolsRail = () => (
  <ToolRail>
    {Object.entries(railIcons).map(([name, icon]) => (
      <React.Fragment key={name}>
        {["اندازه", "آهنربا", "حذف"].includes(name) && <hr />}
        <RailBtn aria-label={name}>{icon}</RailBtn>
      </React.Fragment>
    ))}
    <RailBtn aria-label="لایه‌ها" $last>
      <LayersIcon />
    </RailBtn>
    <HelpBtn aria-label="راهنما">؟</HelpBtn>
    <CollapseBtn aria-label="بستن">
      <ChevronLeft size={9} />
    </CollapseBtn>
  </ToolRail>
);

const Chart = () => (
  <ChartCard>
    <ToolsRail />
    <ChartArea>
      <ChartToolbar />
      <ChartGrid>
        <Pane>
          <CandleChart />
          <MeasureTip>
            <div>1992 (14.19%) , 199224</div>
            <div>132 bars, 206روز</div>
            <div>Vol 167.51M</div>
          </MeasureTip>
          <TvBadge href="#tradingview" aria-label="TradingView">
            <svg width="22" height="12" viewBox="0 0 22 12" fill="#131722">
              <path d="M0 0h9v12H5V4H0zM17 0h5l-5 12h-5z" />
              <circle cx="12.5" cy="2.200" r="2.100" />
            </svg>
          </TvBadge>
        </Pane>
        <PriceAxis>
          <PriceLabels />
        </PriceAxis>
        <TimeAxis>
          <TimeLabels />
        </TimeAxis>
        <AxisCorner aria-label="تنظیمات محور">
          <AxisSunIcon />
        </AxisCorner>
      </ChartGrid>
      <BottomBar>
        <BottomGroup $gap={15}>
          <button>خودکار</button>
          <button>لگاریتمی</button>
          <button>%</button>
          <BarLine />
          <button>(UTC+3:30) 13:19</button>
        </BottomGroup>
        <BottomGroup $gap={10} $end>
          <button aria-label="رفتن به تاریخ">
            <Line>
              <path d="M6.5 12V8a2 2 0 0 1 2-2h12a2 2 0 0 1 2 2v12a2 2 0 0 1-2 2h-5M6.5 10.5h16M10.5 4v4M18.5 4v4M4 18.5h9M9.5 14.5l4 4-4 4" />
            </Line>
          </button>
          <BarLine />
          <BottomGroup $gap={0}>
            {ranges.map((range) => (
              <RangeBtn key={range} dir="rtl">
                {range}
              </RangeBtn>
            ))}
          </BottomGroup>
        </BottomGroup>
      </BottomBar>
    </ChartArea>
  </ChartCard>
);

const OrderBook = () => (
  <DepthBox>
    <DepthTable>
      <thead>
        <tr>
          <HeadCell $w={44} $align="left">تعداد</HeadCell>
          <HeadCell $w={62} $align="left">حجم</HeadCell>
          <HeadCell $w={67} $align="right">قیمت</HeadCell>
        </tr>
      </thead>
      <tbody>
        {sellOrders.map(([count, volume, price]) => (
          <tr
            key={price}
            style={{ background: "linear-gradient(to left, #fbd3d8 2px, transparent 2px)" }}
          >
            <Cell $align="left">{count}</Cell>
            <Cell $align="left">{volume}</Cell>
            <Cell $align="right">{price}</Cell>
          </tr>
        ))}
      </tbody>
    </DepthTable>
    <DepthTable>
      <thead>
        <tr>
          <HeadCell $w={50} $align="left">قیمت</HeadCell>
          <HeadCell $w={76} $align="right">حجم</HeadCell>
          <HeadCell $w={47} $align="right">تعداد</HeadCell>
        </tr>
      </thead>
      <tbody>
        {buyOrders.map(([price, volume, count, share]) => (
          <tr
            key={price}
            style={{
              background: `linear-gradient(to right, #d5f3dd ${share}%, transparent ${share}%)`,
            }}
          >
            <Cell $align="left">{price}</Cell>
            <Cell $align="right">{volume}</Cell>
            <Cell $align="right">{count}</Cell>
          </tr>
        ))}
      </tbody>
    </DepthTable>
  </DepthBox>
);

const holderFill = ({ share, sell }) => {
  const color = sell ? "#fcbcbc" : "#ade8bb";
  return `linear-gradient(to left, ${color} ${share}%, #edf1f6 ${share}%)`;
};

const SymbolPanel = () => (
  <SideCard>
    <SymbolHead>
      <div>
        <PriceLine $big>
          16,027 <Green>0.12%</Green>
        </PriceLine>
        <PriceLine>
          16,019 <Green>0.07%</Green>
        </PriceLine>
      </div>
      <div>
        <SymbolName>
          <Square $color="#34c759" />
          بازده
        </SymbolName>
        <SymbolSub>صندوق س. بازده ثابت-د</SymbolSub>
      </div>
    </SymbolHead>
    <SideBody>
      <OrderBtns>
        <OrderBtn $sell>فروش</OrderBtn>
        <OrderBtn>خرید</OrderBtn>
      </OrderBtns>
      <InfoTabs>
        {infoTabs.map((tab, i) => (
          <InfoTab key={tab} $active={i === 0}>
            {tab}
          </InfoTab>
        ))}
      </InfoTabs>
      <RangeBox>
        <RangeLabels>
          <span>14,408</span>
          <span>16,008</span>
          <span>17,608</span>
        </RangeLabels>
        <svg height="29" viewBox="0 0 350 29" preserveAspectRatio="none">
          <path d="M0 11h350v4H0z" fill="#e2e8f0" />
          <path d="M175 11h2v4h-2z" fill="#fff" />
          <path d="M174 3h8l-4 7z" fill="#101820" />
          <path d="m177 16 4 7h-8z" fill="#cbd3de" />
        </svg>
      </RangeBox>
      <OrderBook />
      <Periods>
        {periods.map((period, i) => (
          <Period key={period} $active={i === 0}>
            {period}
          </Period>
        ))}
      </Periods>
      <IntradayChart />
      <Holders>
        <HolderTitle>حقیقی</HolderTitle>
        <HolderTitle>حقوقی</HolderTitle>
        {holders.map((holder) => (
          <HolderBar
            key={holder.label}
            $sell={holder.sell}
            style={{ background: holderFill(holder) }}
          >
            <span>{holder.label}</span>
            <b>{holder.value}</b>
          </HolderBar>
        ))}
      </Holders>
      <InfoList>
        {info.map(([label, value, persian]) => (
          <InfoRow key={label} $persian={persian}>
            <dt>{label}</dt>
            <dd>{value}</dd>
          </InfoRow>
        ))}
      </InfoList>
    </SideBody>
  </SideCard>
);

const App = () => (
  <Page>
    <GlobalStyle />
    <Browser />
    <Workspace>
      <MainColumn>
        <TopBar />
        <SearchRow>
          <Watchlist>
            {watchlist.map(([name, change, price]) => (
              <WatchItem key={name} href={`#${name}`}>
                <b>{name}</b>
                <Green>{change}</Green>
                <span>{price}</span>
              </WatchItem>
            ))}
          </Watchlist>
          <RecentSearch>
            جستجوهای اخیر
            <ChevronDown size={12} />
          </RecentSearch>
        </SearchRow>
        <Chart />
      </MainColumn>
      <Side>
        <Account>
          <div>
            <UserName>علیرضا شمسی پور</UserName>
            <AccountRow>
              <Square $color="#8b1cf7" />
              <span>قدرت خرید</span> 0
            </AccountRow>
            <AccountRow>
              <Square $color="#fcc800" />
              <span>بلوکه شده</span> 0
            </AccountRow>
          </div>
          <button aria-label="امتیاز">
            <Line size={22}>
              <path
                d="M9 4h10l6 7-11 14L3 11zM8 12l-5-1M20 12l5-1M8 12h3M17 12h3"
                strokeWidth="1.4"
                strokeLinejoin="round"
              />
            </Line>
          </button>
        </Account>
        <SymbolPanel />
      </Side>
    </Workspace>
  </Page>
);

export default App;
